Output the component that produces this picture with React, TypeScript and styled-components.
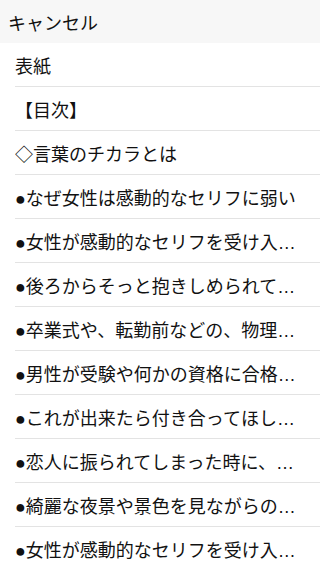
import styled, { createGlobalStyle } from "styled-components";

const GlobalStyle = createGlobalStyle`
  html, body {
    margin: 0;
    padding: 0;
    background: #ffffff;
    font-family: "Liberation Sans", "Noto Sans CJK JP", sans-serif;
    color: #111111;
  }
`;

const Screen = styled.div`
  width: 320px;
  height: 568px;
  overflow: hidden;
  display: flex;
  flex-direction: column;
`;

const Header = styled.div`
  height: 43px;
  flex-shrink: 0;
  display: flex;
  align-items: center;
  padding-left: 8px;
  background-color: #f7f7f7;
  font-size: 18px;
`;

const List = styled.ul`
  list-style: none;
  margin: 0;
  padding: 0;
`;

const Row = styled.li`
  height: 44px;
  margin-left: 15px;
  padding-right: 8px;
  display: flex;
  align-items: center;
  box-sizing: border-box;
  border-bottom: 1px solid #e3e3e3;
  font-size: 18px;
`;

const Label = styled.span`
  min-width: 0;
  white-space: nowrap;
  overflow: hidden;
  text-overflow: ellipsis;
`;

// titles as the table of contents shows them (already shortened)
const chapters = [
  "表紙",
  "【目次】",
  "◇言葉のチカラとは",
  "●なぜ女性は感動的なセリフに弱い",
  "●女性が感動的なセリフを受け入…",
  "●後ろからそっと抱きしめられて…",
  "●卒業式や、転勤前などの、物理…",
  "●男性が受験や何かの資格に合格…",
  "●これが出来たら付き合ってほし…",
  "●恋人に振られてしまった時に、…",
  "●綺麗な夜景や景色を見ながらの…",
  "●女性が感動的なセリフを受け入…",
];

export default function App() {
  return (
    <>
      <GlobalStyle />
      <Screen>
        <Header>キャンセル</Header>
        <List>
          {chapters.map((title, i) => (
            <Row key={i}>
              <Label>{title}</Label>
            </Row>
          ))}
        </List>
      </Screen>
    </>
  );
}
